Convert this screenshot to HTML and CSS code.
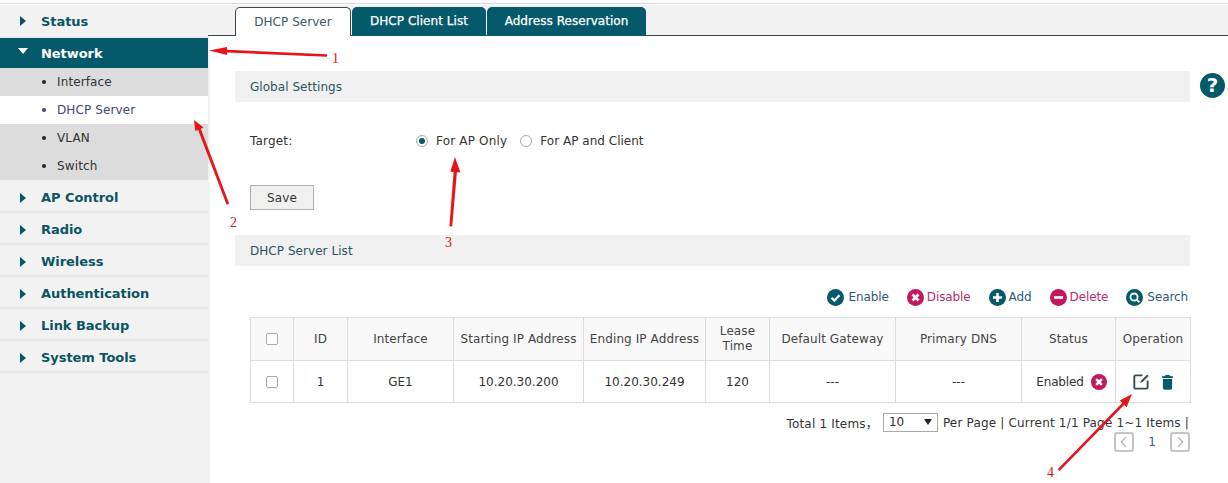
FILE: index.html
```html
<!DOCTYPE html>
<html lang="en">
<head>
<meta charset="utf-8">
<title>DHCP Server</title>
<link rel="stylesheet" href="styles.css">
</head>
<body>
<div class="topline"></div>
<div class="layout">
  <nav class="sidebar">
    <div class="nav-item"><span class="tri"></span>Status</div>
    <div class="nav-item open"><span class="tri down"></span>Network</div>
    <ul class="subnav">
      <li>Interface</li>
      <li class="current">DHCP Server</li>
      <li>VLAN</li>
      <li>Switch</li>
    </ul>
    <div class="nav-item"><span class="tri"></span>AP Control</div>
    <div class="nav-item"><span class="tri"></span>Radio</div>
    <div class="nav-item"><span class="tri"></span>Wireless</div>
    <div class="nav-item"><span class="tri"></span>Authentication</div>
    <div class="nav-item"><span class="tri"></span>Link Backup</div>
    <div class="nav-item"><span class="tri"></span>System Tools</div>
  </nav>
  <main class="main">
    <div class="tabs">
      <div class="tab active">DHCP Server</div>
      <div class="tab client">DHCP Client List</div>
      <div class="tab reserve">Address Reservation</div>
    </div>
    <div class="content">
      <div class="panel">
        <h2 class="bar">Global Settings</h2>
        <div class="target-row">
          <span class="target-label">Target:</span>
          <span class="radio on"></span><span class="radio-text first">For AP Only</span>
          <span class="radio"></span><span class="radio-text second">For AP and Client</span>
        </div>
        <button class="save">Save</button>
        <h2 class="bar">DHCP Server List</h2>
        <div class="toolbar">
          <span class="tool teal">
            <svg class="ico" viewBox="0 0 18 18"><circle cx="9" cy="9" r="9" fill="#04596b"/><path d="M4.8 9.200l3 3 5.400-5.600" fill="none" stroke="#fff" stroke-width="2.400"/></svg>Enable</span>
          <span class="tool pink tight">
            <svg class="ico" viewBox="0 0 18 18"><circle cx="9" cy="9" r="9" fill="#c2185f"/><path d="M5.800 5.800l6.400 6.400M12.200 5.800l-6.400 6.400" stroke="#fff" stroke-width="2.800"/></svg>Disable</span>
          <span class="tool teal tight">
            <svg class="ico" viewBox="0 0 18 18"><circle cx="9" cy="9" r="9" fill="#04596b"/><path d="M9 4.200v9.600M4.200 9h9.600" stroke="#fff" stroke-width="2.800"/></svg>Add</span>
          <span class="tool pink tight">
            <svg class="ico" viewBox="0 0 18 18"><circle cx="9" cy="9" r="9" fill="#c2185f"/><path d="M4.200 9h9.600" stroke="#fff" stroke-width="2.800"/></svg>Delete</span>
          <span class="tool teal">
            <svg class="ico" viewBox="0 0 18 18"><circle cx="9" cy="9" r="9" fill="#04596b"/><circle cx="8.500" cy="8.500" r="3.800" fill="none" stroke="#fff" stroke-width="2"/><path d="M11.200 11.200l3 3" stroke="#fff" stroke-width="2"/></svg>Search</span>
        </div>
        <table class="grid">
          <colgroup>
            <col class="c1"><col class="c2"><col class="c3"><col class="c4"><col class="c5"><col class="c6"><col class="c7"><col class="c8"><col class="c9"><col class="c10">
          </colgroup>
          <thead>
            <tr>
              <th><span class="check"></span></th>
              <th>ID</th>
              <th>Interface</th>
              <th>Starting IP Address</th>
              <th>Ending IP Address</th>
              <th>Lease<br>Time</th>
              <th>Default Gateway</th>
              <th>Primary DNS</th>
              <th>Status</th>
              <th>Operation</th>
            </tr>
          </thead>
          <tbody>
            <tr>
              <td><span class="check"></span></td>
              <td>1</td>
              <td>GE1</td>
              <td>10.20.30.200</td>
              <td>10.20.30.249</td>
              <td>120</td>
              <td>---</td>
              <td>---</td>
              <td><span class="status">Enabled<svg class="ico-s" viewBox="0 0 18 18"><circle cx="9" cy="9" r="9" fill="#c2185f"/><path d="M5.800 5.800l6.400 6.400M12.200 5.800l-6.400 6.400" stroke="#fff" stroke-width="2.800"/></svg></span></td>
              <td>
                <span class="ops">
                  <svg class="op-edit" viewBox="0 0 18 18"><path d="M10 2.500H2.600a1.200 1.200 0 0 0-1.200 1.200v11.700a1.200 1.200 0 0 0 1.200 1.200H14.300a1.200 1.200 0 0 0 1.200-1.200V8" fill="none" stroke="#3c4a50" stroke-width="2"/><path d="M7.500 10.600l1.200-2.600L15 1.600l1.500 1.500-6.400 6.400z" fill="#3c4a50"/></svg>
                  <svg class="op-del" viewBox="0 0 14 18"><path d="M1 2.400h12v2.200H1z" fill="#04596b"/><path d="M4.600 1h4.800v2H4.600z" fill="#04596b"/><path d="M1.800 5.600h10.400v10.200a2 2 0 0 1-2 2H3.800a2 2 0 0 1-2-2z" fill="#04596b"/></svg>
                </span>
              </td>
            </tr>
          </tbody>
        </table>
        <div class="paging">
          <span class="total">Total 1 Items，</span>
          <span class="select">10<span class="caret"></span></span>
          <span>Per Page | Current 1/1 Page 1~1 Items |</span>
        </div>
        <div class="pager">
          <span class="pg"><svg viewBox="0 0 20 20"><path d="M12.500 4l-6 6 6 6" fill="none" stroke="#b5b5b5" stroke-width="1.600"/></svg></span>
          <span class="pg-num">1</span>
          <span class="pg"><svg viewBox="0 0 20 20"><path d="M7.500 4l6 6-6 6" fill="none" stroke="#b5b5b5" stroke-width="1.600"/></svg></span>
        </div>
      </div>
      <svg class="help" viewBox="0 0 24 24"><circle cx="12" cy="12" r="12" fill="#04596b"/><text x="12" y="18.500" text-anchor="middle" class="help-q">?</text></svg>
    </div>
  </main>
</div>
<svg class="notes" viewBox="0 0 1228 483" width="1228" height="483">
  <g fill="#e8141c">
    <path d="M209 50.500l18-3.600 0 2.800 100 4.600 0 2.400-100-4.200 0 2.600z"/>
    <path d="M194 120l9.500 7.500-2.700 1.200 28.400 75-2.600 1-28.500-74.800-2.800 1z"/>
    <path d="M455 157l5.400 15.500-3.500-.3-4.700 54.300-2.800-.2 4.200-54.300-3.300-.3z"/>
    <path d="M1132 394l-5.500 13.500-2.200-2.700-64.800 66.200-1.800-1.800 64.700-66.400-2.600-2.200z"/>
  </g>
  <g class="num">
    <text x="332" y="63">1</text>
    <text x="230" y="227">2</text>
    <text x="445" y="247">3</text>
    <text x="1047" y="477">4</text>
  </g>
</svg>
</body>
</html>
```
FILE: styles.css
```css
* { box-sizing: border-box; }
html, body { margin: 0; padding: 0; }
body {
  width: 1228px;
  height: 483px;
  overflow: hidden;
  background: #fff;
  position: relative;
  font-family: "DejaVu Sans", Verdana, "Noto Sans CJK SC", sans-serif;
  font-size: 12px;
  color: #333;
}
.topline { height: 4px; margin-bottom: 1px; background: #fbfbfb; border-bottom: 1px solid #d9d9d9; }
.layout { display: flex; height: 478px; }
.sidebar { width: 210px; flex: none; background: #f2f2f3; padding-top: 0; }
.nav-item {
  width: 208px;
  height: 32px;
  border-bottom: 2px solid #e9e9ea;
  display: flex;
  align-items: center;
  padding-top: 3px;
  font-weight: 700;
  font-size: 13px;
  color: #0b5464;
  letter-spacing: -0.05px;
}
.nav-item.open { background: #04596b; color: #fff; border-bottom: 0; height: 30px; padding-top: 1px; }
.nav-item:first-child { height: 33px; padding-top: 1px; }
.tri {
  width: 0; height: 0;
  margin: 0 15px 0 20px;
  border-left: 6px solid #0b5464;
  border-top: 5px solid transparent;
  border-bottom: 5px solid transparent;
}
.tri.down {
  margin: -5px 13px 0 18px;
  border-left: 5px solid transparent;
  border-right: 5px solid transparent;
  border-top: 6px solid #fff;
  border-bottom: 0;
}
.subnav { list-style: none; margin: 0 0 1px; padding: 0; width: 208px; background: #dcdcdd; }
.subnav li {
  height: 28px;
  line-height: 28px;
  padding-left: 57px;
  position: relative;
  font-size: 12px;
  letter-spacing: 0.12px;
  color: #333;
}
.subnav li::before {
  content: "";
  position: absolute;
  left: 42px; top: 12px;
  width: 4px; height: 4px;
  border-radius: 50%;
  background: #222;
}
.subnav li.current { background: #fff; color: #3c4a7a; }
.subnav li.current::before { background: #3c4a7a; }

.main { flex: 1; min-width: 0; display: flex; flex-direction: column; margin-left: -2px; }
.tabs {
  height: 31px;
  background: #f2f2f3;
  border-bottom: 1px solid #3c4a50;
  padding: 2px 0 0 27px;
  display: flex;
  gap: 1px;
}
.tab {
  height: 29px;
  line-height: 28px;
  text-align: center;
  border-radius: 5px 5px 0 0;
  background: #04596b;
  color: #fff;
  font-size: 12px;
  letter-spacing: 0.05px;
  font-weight: 400;
  -webkit-text-stroke: 0.25px #fff;
}
.tab.active {
  width: 116px;
  background: #fff;
  color: #3d5566;
  border: 1px solid #3c4a50;
  border-bottom: 0;
  height: 29px;
  letter-spacing: 0.05px;
  -webkit-text-stroke: 0;
}
.tab.client { width: 134px; }
.tab.reserve { width: 159px; }
.content { flex: 1; display: flex; padding-left: 27px; position: relative; }
.panel { width: 955px; flex: none; }
.bar {
  margin: 0;
  height: 31px;
  line-height: 33px;
  background: #f0f0f0;
  padding-left: 15px;
  font-size: 12px;
  font-weight: 400;
  letter-spacing: 0.05px;
  color: #2c5460;
}
.panel > .bar:first-child { margin-top: 35px; }
.target-row {
  height: 22px;
  margin-top: 27px;
  padding-top: 2px;
  display: flex;
  align-items: center;
  padding-left: 15px;
  letter-spacing: 0.18px;
  color: #333;
}
.target-label { width: 166px; }
.radio {
  width: 12px; height: 12px;
  border: 1px solid #aaa;
  border-radius: 50%;
  background: #fff;
  position: relative;
  flex: none;
}
.radio.on::after {
  content: "";
  position: absolute;
  left: 2px; top: 2px;
  width: 6px; height: 6px;
  border-radius: 50%;
  background: #04596b;
}
.radio-text { margin-left: 8px; }
.radio-text.first { margin-right: 13px; }
.radio-text.second { margin-left: 8px; letter-spacing: 0.02px; }
.save {
  display: block;
  margin: 34px 0 25px 15px;
  width: 64px;
  height: 25px;
  border: 1px solid #b0b0b0;
  background: #f0f0f0;
  font: inherit;
  letter-spacing: 0.1px;
  color: #333;
  padding: 0;
}
.toolbar {
  margin-top: 22px;
  height: 18px;
  display: flex;
  justify-content: flex-end;
  align-items: center;
  gap: 18px;
  padding-right: 2px;
  letter-spacing: -0.1px;
}
.tool { display: inline-flex; align-items: center; gap: 4px; }
.tool.tight { gap: 3px; }
.teal { color: #2c5a78; }
.pink { color: #b82d6c; }
.ico { width: 17px; height: 17px; flex: none; }
.grid {
  margin: 11px 0 0 15px;
  width: 940px;
  table-layout: fixed;
  border-collapse: collapse;
  letter-spacing: 0.1px;
}
.c1 { width: 43px; } .c2 { width: 54px; } .c3 { width: 106px; } .c4 { width: 130px; }
.c5 { width: 122px; } .c6 { width: 64px; } .c7 { width: 126px; } .c8 { width: 126px; }
.c9 { width: 94px; } .c10 { width: 75px; }
.grid th, .grid td {
  border: 1px solid #dcdcdc;
  text-align: center;
  padding: 0;
  font-weight: 400;
}
.grid th { height: 43px; background: #f9f9f9; color: #444; line-height: 15px; }
.grid td { height: 42px; color: #333; letter-spacing: 0; }
.check {
  display: inline-block;
  vertical-align: middle;
  width: 12px; height: 12px;
  border: 1px solid #aaa;
  border-radius: 2px;
  background: #fff;
}
.status { display: inline-flex; align-items: center; gap: 7px; margin-left: 6px; letter-spacing: -0.15px; }
.ico-s { width: 16px; height: 16px; }
.ops { display: inline-flex; align-items: center; gap: 11px; vertical-align: middle; }
.op-edit { width: 17px; height: 17px; }
.op-del { width: 13px; height: 16px; }
.paging {
  margin-top: 10px;
  height: 19px;
  padding-right: 1px;
  display: flex;
  justify-content: flex-end;
  align-items: center;
  gap: 5px;
  letter-spacing: 0.18px;
  color: #333;
}
.total { letter-spacing: 0.18px; }
.select {
  width: 55px; height: 19px;
  border: 1px solid #aaa;
  padding-left: 5px;
  line-height: 17px;
  position: relative;
  letter-spacing: 0;
}
.caret {
  position: absolute;
  right: 5px; top: 5px;
  border-left: 4px solid transparent;
  border-right: 4px solid transparent;
  border-top: 6px solid #222;
}
.pager { display: flex; justify-content: flex-end; align-items: center; height: 20px; gap: 0; }
.pg {
  width: 20px; height: 20px;
  border: 2px solid #c4c4c4;
  border-radius: 3px;
  display: block;
}
.pg svg { display: block; width: 16px; height: 16px; }
.pg-num { width: 36px; text-align: center; color: #3c5a80; }
.help { width: 25px; height: 25px; margin: 37px 0 0 10px; flex: none; }
.help-q { font: 700 19px "DejaVu Sans", sans-serif; fill: #fff; }
.notes { position: absolute; left: 0; top: 0; pointer-events: none; }
.num text { font: 14px "Liberation Serif", serif; fill: #d01818; }
```
